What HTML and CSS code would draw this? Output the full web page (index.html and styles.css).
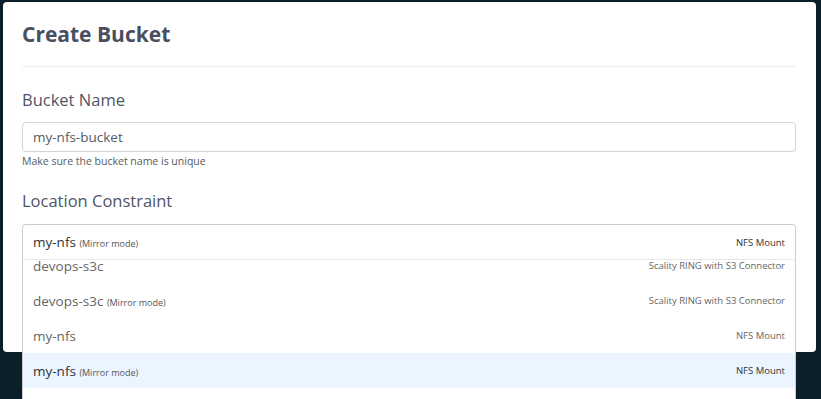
FILE: index.html
```html
<!DOCTYPE html>
<html>
<head>
<meta charset="utf-8">
<link rel="stylesheet" href="styles.css">
</head>
<body>
<div class="modal">
  <div class="modal-header">
    <h1 class="title">Create Bucket</h1>
  </div>
  <div class="modal-body">
    <div class="field">
      <label class="label">Bucket Name</label>
      <div class="input">my-nfs-bucket</div>
      <div class="help">Make sure the bucket name is unique</div>
    </div>
    <div class="field field-location">
      <label class="label">Location Constraint</label>
      <div class="select">
        <div class="select-control">
          <span class="value">my-nfs <small>(Mirror mode)</small></span>
          <span class="type">NFS Mount</span>
        </div>
        <div class="menu">
          <div class="menu-list">
            <div class="option"><span class="name">devops-s3c</span><span class="type">Scality RING with S3 Connector</span></div>
            <div class="option"><span class="name">devops-s3c <small>(Mirror mode)</small></span><span class="type">Scality RING with S3 Connector</span></div>
            <div class="option"><span class="name">my-nfs</span><span class="type">NFS Mount</span></div>
            <div class="option focused"><span class="name">my-nfs <small>(Mirror mode)</small></span><span class="type">NFS Mount</span></div>
          </div>
        </div>
      </div>
    </div>
  </div>
</div>
</body>
</html>
```

FILE: styles.css
```css
html, body {
  margin: 0;
  padding: 0;
}
body {
  background: #0b1f2a;
  width: 821px;
  height: 399px;
  overflow: hidden;
  font-family: "Open Sans", "Liberation Sans", sans-serif;
}
.modal {
  margin: 2px 0 0 3px;
  width: 813px;
  height: 350px;
  background: #ffffff;
  border-radius: 4px;
  box-sizing: border-box;
  padding: 0 20px 0 19px;
}
.modal-header {
  padding: 17px 0 17px 0;
  border-bottom: 1px solid #eeeeee;
}
.title {
  margin: 0;
  font-size: 21px;
  line-height: 30px;
  font-weight: 700;
  color: #4a4f5f;
}
.field {
  display: flex;
  flex-direction: column;
}
.label {
  margin-top: 21px;
  font-size: 16.5px;
  line-height: 24px;
  color: #4f5565;
  font-weight: 400;
}
.input {
  margin-top: 10px;
  height: 30px;
  box-sizing: border-box;
  border: 1px solid #d4d4d4;
  border-radius: 4px;
  padding: 0 10px;
  font-size: 13.5px;
  line-height: 28px;
  color: #555a66;
}
.help {
  margin-top: 2px;
  font-size: 10.5px;
  line-height: 15px;
  color: #555a60;
}
.field-location .label {
  margin-top: 20px;
}
.select {
  position: relative;
  margin-top: 11px;
}
.select-control {
  height: 36px;
  box-sizing: border-box;
  border: 1px solid #cccccc;
  border-bottom-color: #e6e6e6;
  border-radius: 4px 4px 0 0;
  display: flex;
  align-items: center;
  justify-content: space-between;
  padding: 0 10px;
}
.value {
  font-size: 13.5px;
  color: #333333;
}
small {
  font-size: 9px;
  color: #555;
}
.type {
  font-size: 9.5px;
  color: #333333;
}
.menu {
  position: absolute;
  left: 0;
  right: 0;
  top: 36px;
  height: 150px;
  overflow: hidden;
  border-left: 1px solid #cccccc;
  border-right: 1px solid #cccccc;
  background: #ffffff;
}
.menu-list {
  margin-top: -12px;
}
.option {
  height: 35px;
  display: flex;
  align-items: center;
  justify-content: space-between;
  padding: 0 10px;
  color: #666666;
}
.option .name {
  font-size: 13.5px;
}
.option .type {
  color: #666666;
}
.option.focused {
  background: #ebf5ff;
}
.option.focused .name,
.option.focused .type {
  color: #333333;
}
```
